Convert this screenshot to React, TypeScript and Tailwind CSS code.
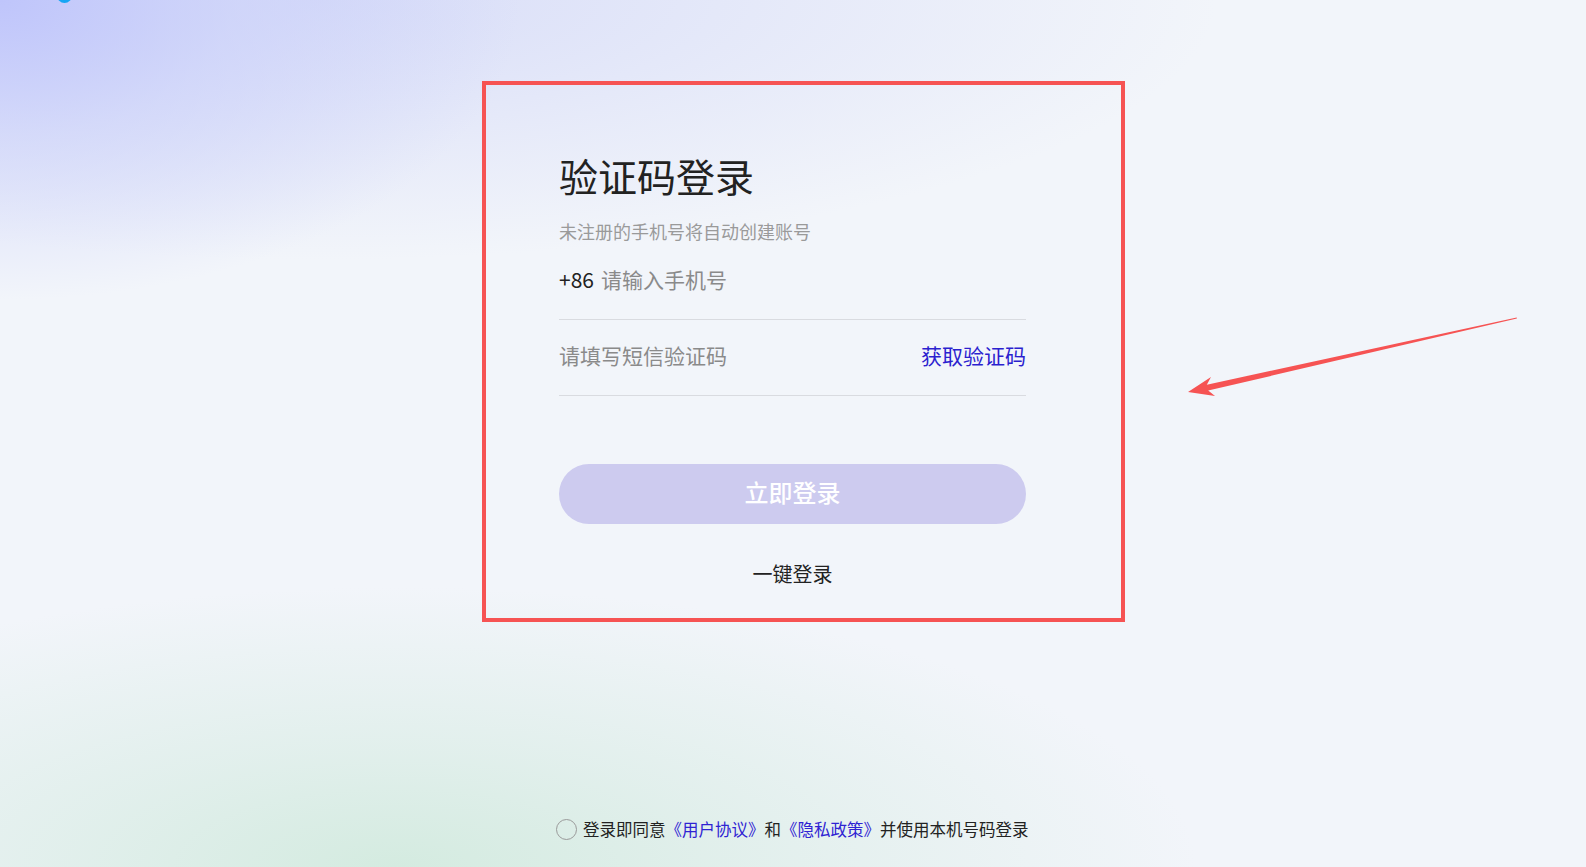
import React, { useState } from "react";

// SMS code login screen, with the red annotation box and arrow on top
const FONT = "font-['Noto_Sans_CJK_SC','Noto_Sans',sans-serif]";

function Arrow() {
  return (
    <svg className="pointer-events-none absolute inset-0 h-full w-full" viewBox="0 0 1586 867" aria-hidden="true">
      <polygon
        fill="#f65353"
        points="1188,392 1211,377 1206.8,384.7 1516.7,317.4 1516.9,318.6 1208.2,390.5 1215,396"
      />
    </svg>
  );
}

export default function App() {
  const [agreed, setAgreed] = useState(false);
  const [phone, setPhone] = useState("");
  const [code, setCode] = useState("");

  return (
    <div
      className={`relative h-[867px] w-full overflow-hidden ${FONT} bg-[#f2f5fa] bg-[image:radial-gradient(ellipse_520px_300px_at_0%_0%,#bfc5fb_0%,rgba(200,206,250,0.6)_45%,rgba(242,245,250,0)_100%),radial-gradient(ellipse_900px_260px_at_20%_0%,rgba(214,219,248,0.9)_0%,rgba(242,245,250,0)_100%),radial-gradient(ellipse_800px_280px_at_25%_100%,#d4ebe0_0%,rgba(216,236,228,0.6)_45%,rgba(242,245,250,0)_100%)]`}
    >
      {/* cut-off logo dot */}
      <div className="absolute left-[57px] top-[-12px] h-[15px] w-[15px] rounded-full bg-[#17a6f4]" />

      <div className="flex flex-col pt-[81px]">
        <div className="ml-[482px] h-[541px] w-[643px] border-4 border-[#f65353] pl-[73px] pt-[67px]">
          <div className="w-[467px]">
            <h1 className="text-[39px] font-normal leading-[47px] text-[#222]">验证码登录</h1>
            <p className="mt-[20px] text-[18px] leading-[24px] text-[#9a9a9a]">未注册的手机号将自动创建账号</p>

            <div className="mt-[22px] flex h-[55px] items-start border-b border-[#d9dbe0]">
              <span className="text-[21px] leading-[28px] text-[#222]">+86</span>
              <input
                value={phone}
                onChange={(e) => setPhone(e.target.value)}
                placeholder="请输入手机号"
                className="ml-[7px] flex-1 bg-transparent text-[21px] leading-[28px] text-[#222] outline-none placeholder:text-[#8a8a8a]"
              />
            </div>

            <div className="flex h-[76px] items-center border-b border-[#d9dbe0] pb-[5px]">
              <input
                value={code}
                onChange={(e) => setCode(e.target.value)}
                placeholder="请填写短信验证码"
                className="flex-1 bg-transparent text-[21px] leading-[28px] text-[#222] outline-none placeholder:text-[#8a8a8a]"
              />
              <button type="button" className="text-[21px] leading-[28px] text-[#2c1fcf]">
                获取验证码
              </button>
            </div>

            <button
              type="button"
              className="mt-[68px] flex h-[60px] w-full items-center justify-center rounded-full bg-[#cdcbef] pb-[4px] text-[24px] font-medium text-white"
            >
              立即登录
            </button>

            <div className="mt-[36px] text-center text-[20px] leading-[28px] text-[#222]">一键登录</div>
          </div>
        </div>

        <div className="ml-[556px] mt-[195px] flex h-[24px] items-center text-[16.5px] text-[#222]">
          <button
            type="button"
            aria-label="同意协议"
            onClick={() => setAgreed((v) => !v)}
            className={`h-[21px] w-[21px] rounded-full border-[1.5px] ${agreed ? "border-[#2c1fcf] bg-[#2c1fcf]" : "border-[#9a9a9a]"}`}
          />
          <span className="ml-[6px] whitespace-nowrap">
            登录即同意<span className="text-[#2f23d3]">《用户协议》</span>和<span className="text-[#2f23d3]">《隐私政策》</span>并使用本机号码登录
          </span>
        </div>
      </div>

      <Arrow />
    </div>
  );
}
